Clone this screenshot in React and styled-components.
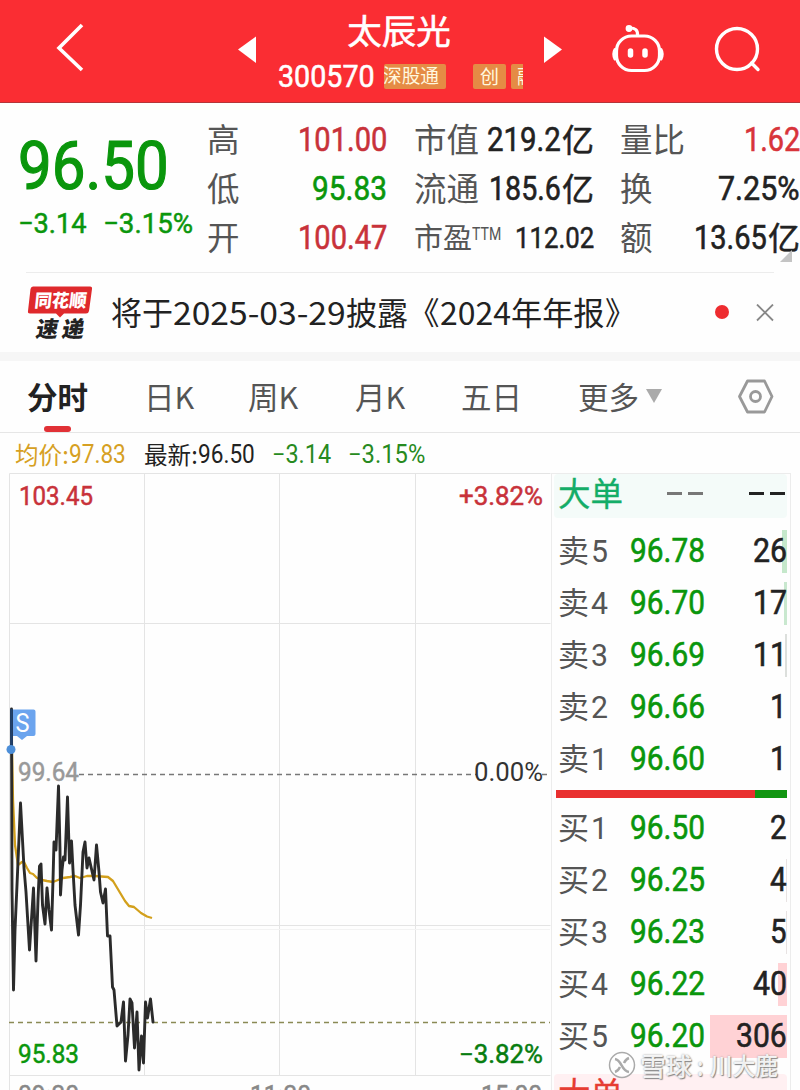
import React, { useLayoutEffect, useRef, useState } from "react";
import styled, { createGlobalStyle } from "styled-components";

const GlobalStyle = createGlobalStyle`
  * { box-sizing: border-box; }
  body {
    margin: 0;
    background: #fefefe;
    font-family: "Noto Sans CJK SC", sans-serif;
    color: #222;
  }
`;

const C = {
  red: "#fa2d33",
  up: "#c8323a",
  down: "#0a960c",
  text: "#222",
  label: "#555",
  line: "#e6e6e6",
};

/* Text squeezed or stretched horizontally to an exact width */
const FitBox = styled.span`
  display: block;
  flex: none;
  width: ${(p) => p.$width}px;
  line-height: 1.2;
  white-space: nowrap;
  font-family: ${(p) => (p.$cjk ? "" : "Roboto, ")}"Noto Sans CJK SC", sans-serif;
  font-size: ${(p) => p.$size}px;
  font-weight: ${(p) => p.$weight || 400};
  color: ${(p) => p.$color || "inherit"};
  -webkit-text-stroke: ${(p) => (p.$strong ? p.$size * 0.018 : 0)}px currentColor;
`;
const FitInner = styled.span`
  display: inline-block;
  transform-origin: 0 50%;
`;
function Fit({ children, width, size, weight, color, cjk, strong }) {
  const ref = useRef(null);
  const [scale, setScale] = useState(1);
  useLayoutEffect(() => {
    setScale(width / ref.current.offsetWidth);
  }, [width, children]);
  return (
    <FitBox $width={width} $size={size} $weight={weight} $color={color} $cjk={cjk} $strong={strong}>
      <FitInner ref={ref} style={{ transform: `scaleX(${scale})` }}>{children}</FitInner>
    </FitBox>
  );
}

const Screen = styled.main`
  width: 800px;
  height: 1090px;
  overflow: hidden;
  display: flex;
  flex-direction: column;
`;

/* ---------- header ---------- */
const Header = styled.header`
  height: 103px;
  flex: none;
  display: grid;
  grid-template-columns: 237px 326px 237px;
  background: ${C.red};
  border-bottom: 1px solid #b5353a;
  color: #fff;
`;
const BackArea = styled.div`
  padding: 22px 0 0 54px;
`;
const StockNav = styled.div`
  display: flex;
  justify-content: space-between;
  padding-top: 36px;
`;
const StockTitle = styled.div`
  width: 246px;
  margin-top: -28px;
  display: flex;
  flex-direction: column;
  align-items: center;
`;
const StockName = styled.h1`
  margin: 0 0 0 -2px;
  height: 50px;
  font-size: 34.5px;
  line-height: 43px;
  font-weight: 400;
  -webkit-text-stroke: 0.6px #fff;
`;
const CodeLine = styled.div`
  display: flex;
  align-items: center;
  width: 244px;
  height: 37px;
`;
const Tag = styled.span`
  height: 25px;
  width: ${(p) => p.$width}px;
  margin-left: ${(p) => p.$gap}px;
  flex: none;
  overflow: hidden;
  display: flex;
  justify-content: ${(p) => p.$align || "center"};
  border-radius: ${(p) => (p.$open ? "2px 0 0 2px" : "2px")};
  background: #e58b45;
  color: #fff8df;
  font-size: 19px;
  line-height: 23px;
  white-space: nowrap;
`;
const Actions = styled.div`
  display: flex;
  padding: 20px 0 0 46px;
  gap: 44px;
`;

/* ---------- quote ---------- */
const Quote = styled.section`
  height: 169px;
  flex: none;
  display: flex;
`;
const PriceArea = styled.div`
  width: 207px;
  padding: 24px 0 0 18px;
`;
const Change = styled.div`
  display: flex;
  gap: 16px;
  margin-top: 1px;
`;
const Stats = styled.div`
  display: grid;
  grid-template-columns: 207px 206px 180px;
  grid-template-rows: repeat(3, 49px);
  padding-top: 12px;
`;
const Stat = styled.div`
  width: 180px;
  display: flex;
  justify-content: space-between;
  align-items: center;
  white-space: nowrap;
`;
const StatLabel = styled.span`
  display: flex;
  align-items: flex-start;
  font-size: ${(p) => (p.$small ? 29 : 32.5)}px;
  line-height: 44px;
  font-weight: 400;
  color: ${C.label};
  margin-top: -3px;
`;
const Ttm = styled.span`
  padding-top: 9px;
  line-height: 1;
`;
const StatValue = styled.span`
  display: flex;
  align-items: center;
`;
const Unit = styled.span`
  font-size: 32px;
  line-height: 44px;
  margin: -3px 0 0 1px;
  font-weight: 400;
  -webkit-text-stroke: 0.5px currentColor;
`;
const Corner = styled.i`
  align-self: flex-end;
  flex: none;
  margin: 0 0 10px -20px;
  border-left: 12px solid transparent;
  border-bottom: 12px solid #c4c4c4;
`;

/* ---------- notice ---------- */
const Notice = styled.section`
  height: 80px;
  flex: none;
  margin: 0 26px;
  border-top: 1px solid #ececec;
  display: flex;
  align-items: center;
`;
const Badge = styled.div`
  width: 66px;
  height: 56px;
  margin-left: 1px;
  flex: none;
`;
const NoticeText = styled.div`
  flex: 1;
  display: flex;
  padding-left: 18px;
  margin-top: -1px;
`;
const Dot = styled.i`
  width: 14px;
  height: 14px;
  border-radius: 50%;
  background: #ee2c30;
  margin: -2px 27px 0 0;
`;
const Band = styled.div`
  height: 9px;
  flex: none;
  background: #f6f6f6;
`;

/* ---------- tabs ---------- */
const Tabs = styled.nav`
  height: 72px;
  flex: none;
  display: flex;
  padding-left: 27px;
  border-bottom: 1px solid ${C.line};
`;
const Tab = styled.div`
  width: ${(p) => p.$width}px;
  display: flex;
  flex-direction: column;
  color: ${(p) => (p.$active ? "#222" : C.label)};
  font-size: 30.5px;
  font-weight: ${(p) => (p.$active ? 700 : 400)};
  line-height: 70px;
  white-space: nowrap;
`;
const Underline = styled.i`
  width: 27px;
  height: 6px;
  margin: -5px 0 0 17px;
  border-radius: 3px;
  background: #e13136;
`;
const More = styled.div`
  display: flex;
  align-items: center;
  gap: 7px;
`;
const Caret = styled.i`
  border: 8.5px solid transparent;
  border-top: 14px solid #aaa;
  border-bottom: 0;
`;
const Settings = styled.div`
  padding-top: 17px;
`;

/* ---------- body ---------- */
const InfoLine = styled.div`
  height: 40px;
  flex: none;
  display: flex;
  align-items: center;
  padding: 4px 0 0 15px;
`;
const InfoLabel = styled.span`
  margin-top: -2px;
`;
const Gap = styled.i`
  flex: none;
  width: ${(p) => p.$w}px;
`;
const Body = styled.section`
  flex: 1;
  display: flex;
  min-height: 0;
`;
const ChartSvg = styled.svg`
  width: 551px;
  height: 617px;
  flex: none;
  display: block;
  font-family: Roboto, sans-serif;
  font-size: 25px;
`;
const Book = styled.div`
  position: relative;
  width: 240px;
  height: 617px;
  overflow: hidden;
  flex: none;
  border: 1px solid #ececec;
  border-width: 1px 1px 0 1px;
  padding: 0 3px 0 4px;
`;
const BigRow = styled.div`
  height: 44px;
  margin-left: -2px;
  display: flex;
  align-items: center;
  border-radius: 4px;
  padding: 0 0 5px 4px;
  background: ${(p) => (p.$buy ? "#fff0f2" : "#f4fbf9")};
  color: ${(p) => (p.$buy ? "#e63c32" : "#14ad68")};
  font-size: 32.5px;
  line-height: 38px;
  margin-top: ${(p) => (p.$buy ? 12 : 0)}px;
`;
const BigName = styled.span`
  width: 109px;
  margin-top: -3px;
  -webkit-text-stroke: 0.3px currentColor;
`;
const Dashes = styled.span`
  display: flex;
  gap: 6px;
  margin-right: ${(p) => p.$gap}px;
  i {
    width: 15px;
    height: 3px;
    background: ${(p) => p.$color};
  }
`;
const Side = styled.div`
  padding-top: ${(p) => p.$top}px;
`;
const Row = styled.div`
  height: 52px;
  display: flex;
  align-items: center;
  padding-left: 2px;
`;
const Level = styled.span`
  width: 72px;
  display: flex;
  align-items: center;
  gap: 2px;
  color: ${C.label};
  font-size: 31px;
  line-height: 40px;
  font-weight: 400;
`;
const LevelName = styled.span`
  margin-top: -3px;
`;
const Volume = styled.span`
  flex: 1;
  height: 43px;
  margin-left: 3px;
  display: flex;
  align-items: center;
  justify-content: flex-end;
  background: linear-gradient(${(p) => p.$tint}, ${(p) => p.$tint}) right / ${(p) => p.$bar}px 100% no-repeat;
`;
const Ratio = styled.div`
  display: flex;
  height: 8px;
  margin-top: 5px;
  background: #119511;
`;
const RatioBuy = styled.i`
  width: 199px;
  background: #e9302f;
`;
const Watermark = styled.div`
  position: absolute;
  left: 56px;
  top: 576px;
  display: flex;
  align-items: center;
  color: rgba(255, 255, 255, 0.9);
  text-shadow: 1px 1px 1px #888, 0 0 2px #999;
`;

const statRows = [
  [["高", "101.00", 89, C.up], ["市值", "219.2", 74, C.text, "亿"], ["量比", "1.62", 56, "#d8343a"]],
  [["低", "95.83", 75, C.down], ["流通", "185.6", 72, C.text, "亿"], ["换", "7.25%", 82, C.text]],
  [["开", "100.47", 89, C.up], ["市盈", "112.02", 79, C.text], ["额", "13.65", 73, C.text, "亿"]],
];

const noticeParts = [
  ["将于", 62],
  ["2025-03-29", 173],
  ["披露", 62],
  ["《", 32],
  ["2024", 71],
  ["年年报", 94],
  ["》", 31],
];

const sells = [
  ["5", "96.78", "26", 5, "#c5e8cb"],
  ["4", "96.70", "17", 3, "#c9e8cf"],
  ["3", "96.69", "11", 2, "#dcdfdc"],
  ["2", "96.66", "1", 0, "#eee"],
  ["1", "96.60", "1", 0, "#eee"],
];
const buys = [
  ["1", "96.50", "2", 0, "#eee"],
  ["2", "96.25", "4", 1, "#e8e3e3"],
  ["3", "96.23", "5", 1, "#e8e3e3"],
  ["4", "96.22", "40", 9, "#ffd2d5"],
  ["5", "96.20", "306", 77, "#ffd2d5"],
];

const pricePoints =
  "11.5,709 12,890 13.5,990 15,930 17,885 20.5,803 24,868 26,892 29.5,950 33.5,888 36,961 38,900 39.5,866 41,864 42.5,905 45,924 47,888 49,910 51.5,930 53,880 54,842 56,850 58.5,786 60,850 60.5,895 62,870 63.5,857 65,860 67.5,797 69.5,863 71.5,841 73,870 75,905 78.5,935 80.5,905 83,852 85,842 87,868 89,858 94,880 96.5,845 99,872 100.5,892 103,903 105.5,889 107.5,936 110,936 112.5,987 114,990 117,1026 121,1022 123.5,1002 125.5,1061 128,1035 130,999 132,1003 134.5,1048 137,1012 139,1070 141.5,1036 143.5,1063 145.5,1002 147.5,1018 150.5,999 153,1022";
const averagePoints =
  "12,750 13,800 15,845 18,865 22,862 24,862 27,868 30,873 33,874 37,878 42,880 47,881 53,882 58,880 63,878 70,877 75,876 80,878 87,876 95,876 108,877 113,881 119,891 125,901 129,906 134,907 141,913 147,916.5 152,918";

function Label({ x, y, w, fill, thin, children }) {
  return (
    <text
      x={x}
      y={y}
      fill={fill}
      stroke={fill}
      strokeWidth={thin ? 0 : 0.5}
      textLength={w}
      lengthAdjust="spacingAndGlyphs"
    >
      {children}
    </text>
  );
}

function Chart() {
  return (
    <ChartSvg viewBox="0 473 551 617">
      <g stroke="#e4e4e4" fill="none">
        <path d="M9.5 1090V473.5H550.5M9.5 1075.5H550.5M9.5 623.5H550.5M9.5 925.5H550.5M144.5 474V1075M279.5 474V1075M415.5 474V1075" />
        <path d="M144 929.5H550" stroke="#f3f3f3" />
      </g>
      <path d="M79 774.5H476M542 774.5H550" stroke="#777" strokeWidth="1.3" strokeDasharray="5 4" />
      <path d="M9 1022.5H550" stroke="#8a8a55" strokeWidth="1.3" strokeDasharray="5 4" />
      <path d="M10 709.5H33.5Q35.5 709.5 35.5 711.5V734Q35.5 736 33.5 736H27L22 740L17 736H10Z" fill="#6ba4ee" />
      <polyline points={averagePoints} fill="none" stroke="#d3a01c" strokeWidth="2.3" strokeLinejoin="round" />
      <polyline points={pricePoints} fill="none" stroke="#2b2b2b" strokeWidth="2.9" strokeLinejoin="round" strokeLinecap="round" />
      <circle cx="11" cy="749.5" r="4.5" fill="#4c8ed8" />
      <path d="M11.5 709V745" stroke="#20406c" strokeWidth="2.6" />
      <Label x="15.5" y="731.5" w="14" fill="#fff" thin>S</Label>
      <Label x="19" y="504.5" w="74" fill={C.up}>103.45</Label>
      <Label x="459" y="504.5" w="84" fill={C.up}>+3.82%</Label>
      <Label x="18" y="781" w="61" fill="#999">99.64</Label>
      <Label x="474" y="781" w="69" fill="#333" thin>0.00%</Label>
      <Label x="18" y="1063" w="61" fill={C.down}>95.83</Label>
      <Label x="459" y="1063" w="84" fill="#087d10">−3.82%</Label>
      <Label x="18" y="1104" w="61" fill="#888">09:30</Label>
      <Label x="250" y="1104" w="61" fill="#888">11:30</Label>
      <Label x="481" y="1104" w="61" fill="#888">15:00</Label>
    </ChartSvg>
  );
}

function Levels({ name, rows }) {
  const volWidths = { 1: 17, 2: 34, 3: 51 };
  return rows.map(([n, price, vol, bar, tint]) => (
    <Row key={n}>
      <Level>
        <LevelName>{name}</LevelName>
        <Fit width={17} size={32}>{n}</Fit>
      </Level>
      <Fit width={75} size={33} strong color={C.down}>{price}</Fit>
      <Volume $bar={bar} $tint={tint}>
        <Fit width={volWidths[vol.length]} size={33} strong color={C.text}>{vol}</Fit>
      </Volume>
    </Row>
  ));
}

export default function App() {
  return (
    <Screen>
      <GlobalStyle />
      <Header>
        <BackArea>
          <svg width="34" height="54" fill="none" stroke="#fff" strokeWidth="3.6">
            <path d="M28 3L5 26L28 48" />
          </svg>
        </BackArea>
        <StockNav>
          <svg width="20" height="28"><path d="M1 13.5L19 0.5V27Z" fill="#fff" /></svg>
          <StockTitle>
            <StockName>太辰光</StockName>
            <CodeLine>
              <Fit width={97} size={31} strong>300570</Fit>
              <Tag $width={62} $gap={9} $align="flex-end"><Fit width={56} size={19} cjk>深股通</Fit><Gap $w={7} /></Tag>
              <Tag $width={33} $gap={27}>创</Tag>
              <Tag $width={12} $gap={5} $align="flex-start" $open><Gap $w={6} />融</Tag>
            </CodeLine>
          </StockTitle>
          <svg width="20" height="28"><path d="M19 13.5L1 0.5V27Z" fill="#fff" /></svg>
        </StockNav>
        <Actions>
          <svg width="58" height="60" viewBox="609 20 58 60" fill="none" stroke="#fff" strokeWidth="3.2" strokeLinecap="round">
            <rect x="616.5" y="36" width="43" height="34.5" rx="15" />
            <path d="M637.5 35.5C638 30 635 28 630 28" />
            <circle cx="629" cy="28.5" r="1.8" fill="#fff" />
            <path d="M615 49.5Q612.5 54 615 59M661 49.5Q663.5 54 661 59" strokeWidth="3" />
            <path d="M630.5 51V55M645 51V55" strokeWidth="5.5" />
          </svg>
          <svg width="50" height="60" viewBox="711 20 50 60" fill="none" stroke="#fff" strokeWidth="3.4" strokeLinecap="round">
            <circle cx="737" cy="49" r="20.5" />
            <path d="M751.5 63L758 69.5" />
          </svg>
        </Actions>
      </Header>

      <Quote>
        <PriceArea>
          <Fit width={151} size={66} strong color={C.down}>96.50</Fit>
          <Change>
            <Fit width={69} size={28} strong color={C.down}>−3.14</Fit>
            <Fit width={90} size={28} strong color={C.down}>−3.15%</Fit>
          </Change>
        </PriceArea>
        <Stats>
          {statRows.flat().map(([label, value, w, color, unit]) => (
            <Stat key={label}>
              <StatLabel $small={label === "市盈"}>
                {label}
                {label === "市盈" && <Ttm><Fit width={29} size={18}>TTM</Fit></Ttm>}
              </StatLabel>
              <StatValue>
                <Fit width={w} size={label === "市盈" ? 30 : 33} strong color={color}>{value}</Fit>
                {unit && <Unit>{unit}</Unit>}
              </StatValue>
            </Stat>
          ))}
        </Stats>
        <Corner />
      </Quote>

      <Notice>
        <Badge>
          <svg width="66" height="56" viewBox="27 284 66 56" fontFamily="Noto Sans CJK SC, sans-serif" fontWeight="900">
            <path d="M33 285.5H90Q92.5 285.5 92 288L89 310Q88.5 312.5 86 312.5H64L60 316.5L56 312.5H30Q27.5 312.5 28 310L30.5 288Q31 285.5 33 285.5Z" fill="#df292c" />
            <text transform="translate(34 306) skewX(-6)" fontSize="18" fill="#fff" textLength="52" lengthAdjust="spacingAndGlyphs">同花顺</text>
            <text transform="translate(35 336) skewX(-10)" fontSize="22" fill="#222" textLength="48">速递</text>
          </svg>
        </Badge>
        <NoticeText>
          {noticeParts.map(([text, width]) => (
            <Fit key={text} width={width} size={31.5} cjk>{text}</Fit>
          ))}
        </NoticeText>
        <Dot />
        <svg width="18" height="18" stroke="#888" strokeWidth="1.8"><path d="M1 0.5L17 16.5M17 0.5L1 16.5" /></svg>
      </Notice>
      <Band />

      <Tabs>
        <Tab $width={117} $active>分时<Underline /></Tab>
        <Tab $width={104}>日K</Tab>
        <Tab $width={107}>周K</Tab>
        <Tab $width={106}>月K</Tab>
        <Tab $width={117}>五日</Tab>
        <Tab $width={159}><More>更多<Caret /></More></Tab>
        <Settings>
          <svg width="38" height="36" fill="none" stroke="#999" strokeWidth="2.8" strokeLinejoin="round">
            <path d="M10.5 3H27.5L35 18.5L27.5 34H10.5L2.5 18.5Z" />
            <circle cx="18.5" cy="18.5" r="5" />
          </svg>
        </Settings>
      </Tabs>

      <InfoLine>
        <InfoLabel><Fit width={54} size={24} color="#d6a023" cjk>均价:</Fit></InfoLabel>
        <Fit width={57} size={25} color="#d6a023">97.83</Fit>
        <Gap $w={18} />
        <InfoLabel><Fit width={54} size={24} cjk>最新:</Fit></InfoLabel>
        <Fit width={57} size={25}>96.50</Fit>
        <Gap $w={17} />
        <Fit width={59} size={25} color="#278a20">−3.14</Fit>
        <Gap $w={17} />
        <Fit width={77} size={25} color="#278a20">−3.15%</Fit>
      </InfoLine>

      <Body>
        <Chart />
        <Book>
          <BigRow>
            <BigName>大单</BigName>
            <Dashes $color="#777" $gap={46}><i /><i /></Dashes>
            <Dashes $color="#222" $gap={0}><i /><i /></Dashes>
          </BigRow>
          <Side $top={7}><Levels name="卖" rows={sells} /></Side>
          <Ratio><RatioBuy /></Ratio>
          <Side $top={4}><Levels name="买" rows={buys} /></Side>
          <BigRow $buy><BigName>大单</BigName></BigRow>
          <Watermark>
            <svg width="28" height="28" fill="none" stroke="#aaa" strokeWidth="1.5">
              <circle cx="14" cy="14" r="12.5" fill="rgba(255,255,255,.75)" />
              <path d="M7 8C14 9 13 20 21 21M21 7C18 8 17 10 16 12M7 21C10 20 11 18 12 16" strokeWidth="2.5" />
            </svg>
            <Gap $w={4} />
            <Fit width={52} size={25} weight={500} cjk>雪球</Fit>
            <Gap $w={5} />
            <Fit width={6} size={25} weight={500} cjk>:</Fit>
            <Gap $w={7} />
            <Fit width={68} size={24} weight={500} cjk>川大鹿</Fit>
          </Watermark>
        </Book>
      </Body>
    </Screen>
  );
}
